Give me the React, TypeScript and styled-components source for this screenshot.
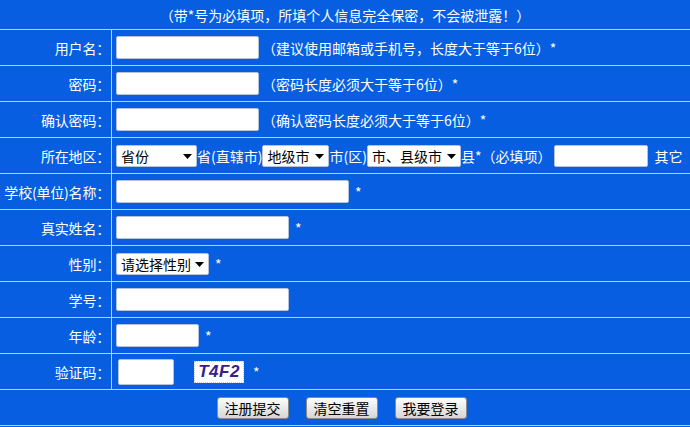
import styled, { createGlobalStyle } from 'styled-components';

const GlobalStyle = createGlobalStyle`
  html, body {
    margin: 0;
    padding: 0;
    background: #075ee0;
  }
  body {
    font-family: "Noto Sans CJK SC", "DejaVu Sans", sans-serif;
    font-size: 14px;
    color: #fff;
  }
`;

const Page = styled.div`
  width: 690px;
  background: #075ee0;
`;

const Notice = styled.div`
  height: 30px;
  border-bottom: 1px solid #c9cdd6;
  display: flex;
  align-items: center;
  justify-content: center;
  box-sizing: border-box;
  font-size: 14px;
`;

const Row = styled.div`
  display: grid;
  grid-template-columns: 112px 1fr;
  height: 36px;
  box-sizing: border-box;
  border-bottom: 1px solid #c9cdd6;
`;

const Label = styled.div`
  border-right: 1px solid #c9cdd6;
  display: flex;
  align-items: center;
  justify-content: flex-end;
  padding-right: 1px;
  white-space: nowrap;
  letter-spacing: -0.2px;
`;

const Field = styled.div<{ $pad?: number }>`
  display: flex;
  align-items: center;
  padding-left: ${(p) => p.$pad ?? 4}px;
  white-space: nowrap;
`;

const TextInput = styled.input<{ $w: number; $h?: number }>`
  width: ${(p) => p.$w}px;
  height: ${(p) => p.$h ?? 23}px;
  box-sizing: border-box;
  border: 1px solid #b4c2dc;
  border-radius: 2px;
  background: #fff;
  padding: 0 3px;
  font-size: 14px;
  outline: none;
`;

const Hint = styled.span<{ $gap?: number }>`
  margin-left: ${(p) => p.$gap ?? 0}px;
`;

const SelectWrap = styled.span<{ $w: number }>`
  position: relative;
  display: inline-block;
  width: ${(p) => p.$w}px;
  height: 22px;
`;

const Select = styled.select`
  appearance: none;
  width: 100%;
  height: 100%;
  box-sizing: border-box;
  border: 1px solid #b4c2dc;
  border-radius: 2px;
  background: #fff;
  color: #000;
  padding: 0 0 0 4px;
  font-family: "Noto Sans CJK SC", sans-serif;
  font-size: 14px;
  outline: none;
`;

const Arrow = styled.svg`
  position: absolute;
  right: 5px;
  top: 9px;
  pointer-events: none;
`;

const Captcha = styled.span`
  display: inline-flex;
  align-items: center;
  justify-content: center;
  width: 50px;
  height: 22px;
  box-sizing: border-box;
  background: #fff;
  border: 1px dotted #c8c8d8;
  margin-left: 20px;
  font-family: "Liberation Sans", Arial, sans-serif;
  font-weight: bold;
  font-style: italic;
  font-size: 17px;
  color: #3a1c8c;
  letter-spacing: 0.5px;
`;

const ButtonRow = styled.div`
  height: 36px;
  box-sizing: border-box;
  border-bottom: 1px solid #c9cdd6;
  display: flex;
  align-items: center;
  justify-content: center;
  gap: 17px;
  padding-right: 7px;
`;

const Button = styled.button`
  width: 72px;
  height: 22px;
  box-sizing: border-box;
  border: 1px solid #8a8a8a;
  border-radius: 3px;
  background: linear-gradient(#fdfdfd, #e6e6e6 60%, #d6d6d6);
  color: #000;
  font-family: "Noto Sans CJK SC", sans-serif;
  font-size: 14px;
  padding: 0;
  cursor: pointer;
`;

function DropDown({ width, value }: { width: number; value: string }) {
  return (
    <SelectWrap $w={width}>
      <Select defaultValue={value}>
        <option>{value}</option>
      </Select>
      <Arrow width="9" height="5" viewBox="0 0 9 5">
        <path d="M0 0h9L4.5 5z" fill="#000" />
      </Arrow>
    </SelectWrap>
  );
}

export default function App() {
  return (
    <Page>
      <GlobalStyle />
      <Notice>（带*号为必填项，所填个人信息完全保密，不会被泄露！）</Notice>

      <Row>
        <Label>用户名：</Label>
        <Field>
          <TextInput $w={143} />
          <Hint $gap={3}>（建议使用邮箱或手机号，长度大于等于6位）*</Hint>
        </Field>
      </Row>

      <Row>
        <Label>密码：</Label>
        <Field>
          <TextInput $w={143} type="password" />
          <Hint $gap={3}>（密码长度必须大于等于6位）*</Hint>
        </Field>
      </Row>

      <Row>
        <Label>确认密码：</Label>
        <Field>
          <TextInput $w={143} type="password" />
          <Hint $gap={3}>（确认密码长度必须大于等于6位）*</Hint>
        </Field>
      </Row>

      <Row>
        <Label>所在地区：</Label>
        <Field>
          <DropDown width={81} value="省份" />
          <Hint>省(直辖市)</Hint>
          <DropDown width={67} value="地级市" />
          <Hint>市(区)</Hint>
          <DropDown width={94} value="市、县级市" />
          <Hint>县*（必填项）</Hint>
          <TextInput $w={94} $h={22} style={{ marginLeft: 3 }} />
          <Hint $gap={6}>其它</Hint>
        </Field>
      </Row>

      <Row>
        <Label>学校(单位)名称：</Label>
        <Field>
          <TextInput $w={233} />
          <Hint $gap={6}>*</Hint>
        </Field>
      </Row>

      <Row>
        <Label>真实姓名：</Label>
        <Field>
          <TextInput $w={173} />
          <Hint $gap={6}>*</Hint>
        </Field>
      </Row>

      <Row>
        <Label>性别：</Label>
        <Field>
          <DropDown width={93} value="请选择性别" />
          <Hint $gap={6}>*</Hint>
        </Field>
      </Row>

      <Row>
        <Label>学号：</Label>
        <Field>
          <TextInput $w={173} />
        </Field>
      </Row>

      <Row>
        <Label>年龄：</Label>
        <Field>
          <TextInput $w={83} />
          <Hint $gap={6}>*</Hint>
        </Field>
      </Row>

      <Row>
        <Label>验证码：</Label>
        <Field $pad={6}>
          <TextInput $w={56} $h={26} />
          <Captcha>T4F2</Captcha>
          <Hint $gap={9}>*</Hint>
        </Field>
      </Row>

      <ButtonRow>
        <Button>注册提交</Button>
        <Button>清空重置</Button>
        <Button>我要登录</Button>
      </ButtonRow>
    </Page>
  );
}
